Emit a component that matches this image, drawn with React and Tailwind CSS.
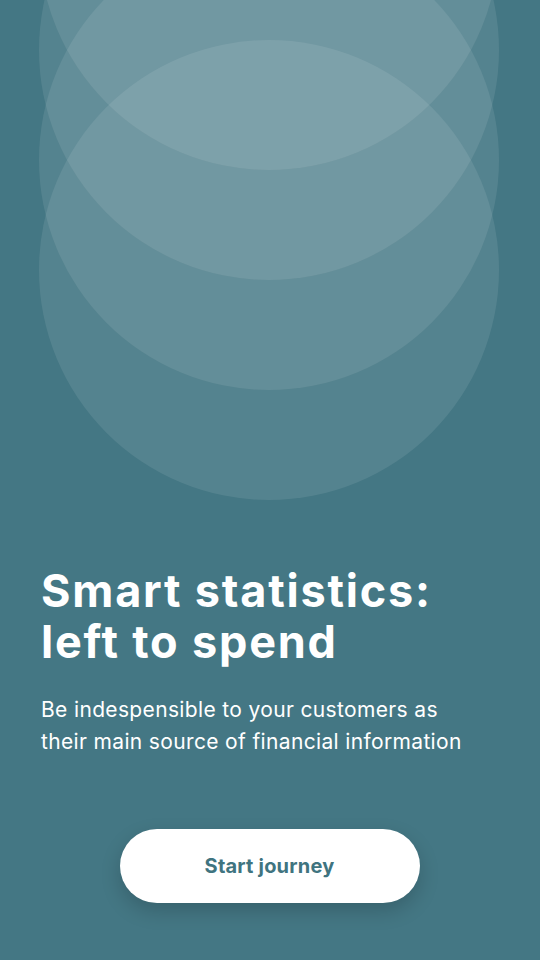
import React from "react";

// Onboarding screen: stacked translucent circles above a headline and CTA
const circles = [-290, -180, -70, 40];

export default function App() {
  return (
    <div className="relative w-[540px] h-[960px] overflow-hidden bg-[#447784]" style={{ fontFamily: "Inter, 'Noto Sans', sans-serif" }}>
      {circles.map((top) => (
        <div
          key={top}
          className="absolute left-[39px] w-[460px] h-[460px] rounded-full bg-white/[0.09]"
          style={{ top }}
        />
      ))}

      <div className="relative flex flex-col px-[41px] pt-[565px]">
        <h1 className="text-[45px] leading-[51px] font-bold text-white tracking-[1.8px]">
          Smart statistics:
          <br />
          left to spend
        </h1>
        <p className="mt-[27px] text-[21px] leading-[32px] text-white tracking-[0.35px]">
          Be indespensible to your customers as
          <br />
          their main source of financial information
        </p>

        <div className="flex justify-center mt-[71px] pr-[1px]">
          <button className="w-[300px] h-[74px] rounded-full bg-white text-[20px] font-bold text-[#3f7480] tracking-[0.2px] shadow-[0_8px_20px_rgba(0,0,0,0.18)]">
            Start journey
          </button>
        </div>
      </div>
    </div>
  );
}
